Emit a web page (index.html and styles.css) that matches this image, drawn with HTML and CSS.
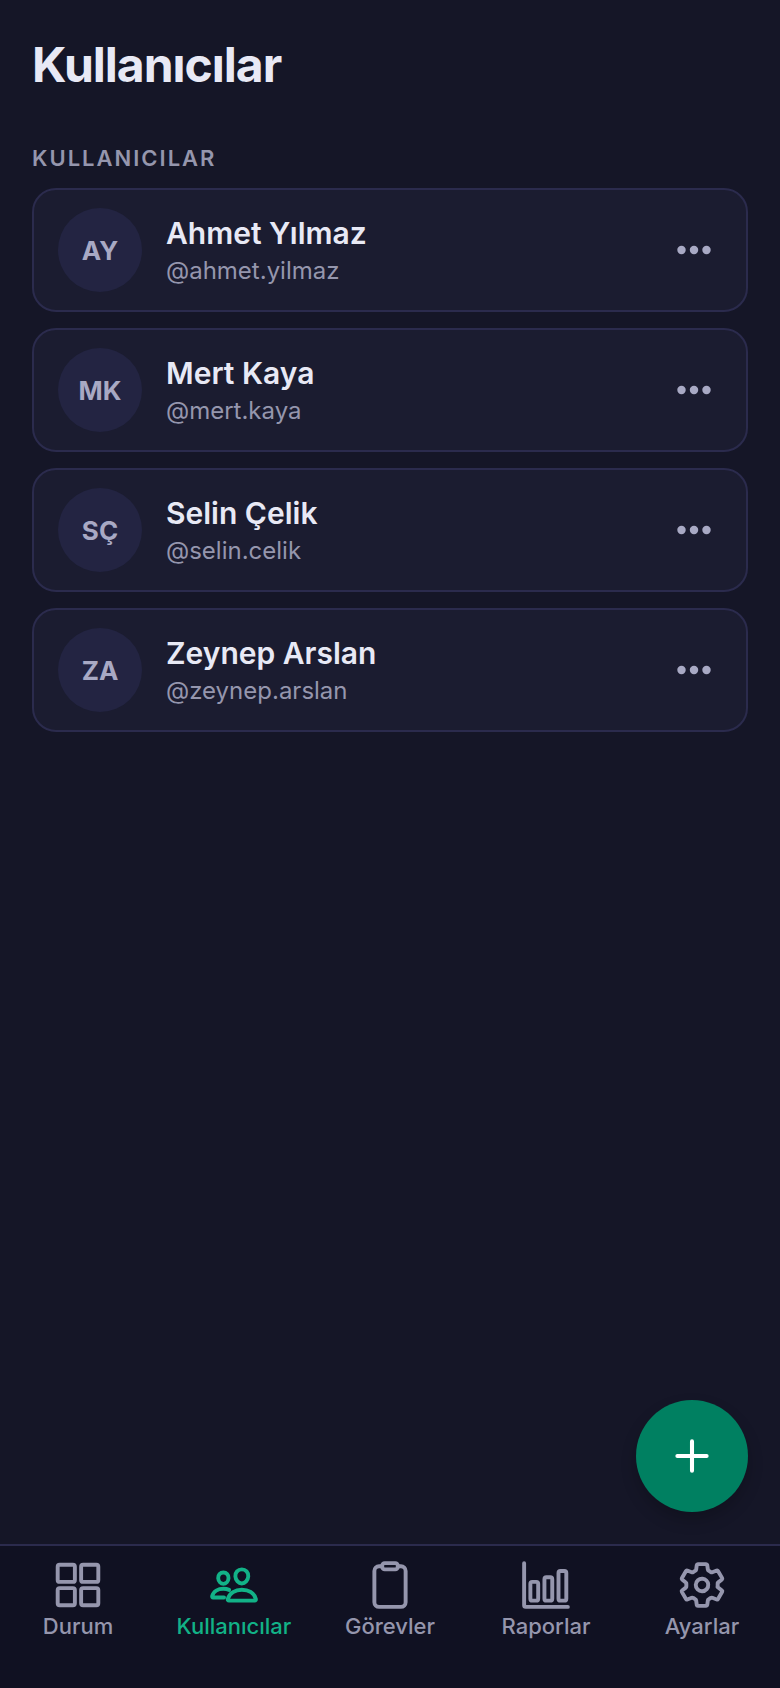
FILE: index.html
```html
<!DOCTYPE html>
<html lang="tr">
<head>
    <meta charset="UTF-8">
    <meta name="viewport" content="width=device-width, initial-scale=1.0">
    <title>Kullanıcılar</title>
    <link rel="stylesheet" href="styles.css">
</head>
<body>
    <main class="content">
        <h1>Kullanıcılar</h1>

        <!-- User list -->
        <h2>KULLANICILAR</h2>
        <ul class="user-list">
            <li class="user-card">
                <div class="avatar">AY</div>
                <div class="user-info">
                    <p class="name">Ahmet Yılmaz</p>
                    <p class="handle">@ahmet.yilmaz</p>
                </div>
                <button class="more" aria-label="Ahmet Yılmaz seçenekleri">
                    <svg viewBox="0 0 512 512"><circle cx="96" cy="256" r="54"/><circle cx="256" cy="256" r="54"/><circle cx="416" cy="256" r="54"/></svg>
                </button>
            </li>
            <li class="user-card">
                <div class="avatar">MK</div>
                <div class="user-info">
                    <p class="name">Mert Kaya</p>
                    <p class="handle">@mert.kaya</p>
                </div>
                <button class="more" aria-label="Mert Kaya seçenekleri">
                    <svg viewBox="0 0 512 512"><circle cx="96" cy="256" r="54"/><circle cx="256" cy="256" r="54"/><circle cx="416" cy="256" r="54"/></svg>
                </button>
            </li>
            <li class="user-card">
                <div class="avatar">SÇ</div>
                <div class="user-info">
                    <p class="name">Selin Çelik</p>
                    <p class="handle">@selin.celik</p>
                </div>
                <button class="more" aria-label="Selin Çelik seçenekleri">
                    <svg viewBox="0 0 512 512"><circle cx="96" cy="256" r="54"/><circle cx="256" cy="256" r="54"/><circle cx="416" cy="256" r="54"/></svg>
                </button>
            </li>
            <li class="user-card">
                <div class="avatar">ZA</div>
                <div class="user-info">
                    <p class="name">Zeynep Arslan</p>
                    <p class="handle">@zeynep.arslan</p>
                </div>
                <button class="more" aria-label="Zeynep Arslan seçenekleri">
                    <svg viewBox="0 0 512 512"><circle cx="96" cy="256" r="54"/><circle cx="256" cy="256" r="54"/><circle cx="416" cy="256" r="54"/></svg>
                </button>
            </li>
        </ul>
    </main>

    <button class="fab" aria-label="Kullanıcı ekle">
        <svg class="icon" viewBox="0 0 512 512"><path d="M256 112v288M400 256H112"/></svg>
    </button>

    <!-- Bottom tabs -->
    <nav class="tab-bar">
        <a href="#durum" class="tab">
            <svg class="icon" viewBox="0 0 512 512">
                <rect x="48" y="48" width="176" height="176" rx="20"/>
                <rect x="288" y="48" width="176" height="176" rx="20"/>
                <rect x="48" y="288" width="176" height="176" rx="20"/>
                <rect x="288" y="288" width="176" height="176" rx="20"/>
            </svg>
            <span>Durum</span>
        </a>
        <a href="#kullanicilar" class="tab active">
            <svg class="icon" viewBox="0 0 512 512">
                <path d="M402 168c-2.93 40.67-33.1 72-66 72s-63.12-31.32-66-72c-3-42.31 26.37-72 66-72s69 30.46 66 72z"/>
                <path d="M336 304c-65.17 0-127.84 32.37-143.54 95.41-2.08 8.34 3.15 16.59 11.72 16.59h263.65c8.57 0 13.77-8.25 11.72-16.59C463.85 335.36 401.18 304 336 304z"/>
                <path d="M200 185.94c-2.34 32.48-26.72 58.06-53 58.06s-50.7-25.57-53-58.06C91.61 152.15 115.34 128 147 128s55.39 24.77 53 57.94z"/>
                <path d="M206 306c-18.05-8.27-37.93-11.45-59-11.45-52 0-102.1 25.85-114.65 76.2-1.65 6.66 2.53 13.25 9.37 13.25H154"/>
            </svg>
            <span>Kullanıcılar</span>
        </a>
        <a href="#gorevler" class="tab">
            <svg class="icon" viewBox="0 0 512 512">
                <path d="M336 64h32a48 48 0 0 1 48 48v320a48 48 0 0 1-48 48H144a48 48 0 0 1-48-48V112a48 48 0 0 1 48-48h32"/>
                <rect x="176" y="32" width="160" height="64" rx="26"/>
            </svg>
            <span>Görevler</span>
        </a>
        <a href="#raporlar" class="tab">
            <svg class="icon" viewBox="0 0 512 512">
                <path d="M32 32v432a16 16 0 0 0 16 16h432"/>
                <rect x="96" y="224" width="80" height="192" rx="20"/>
                <rect x="240" y="176" width="80" height="240" rx="20"/>
                <rect x="384" y="112" width="80" height="304" rx="20"/>
            </svg>
            <span>Raporlar</span>
        </a>
        <a href="#ayarlar" class="tab">
            <svg class="icon" viewBox="0 0 512 512">
                <path d="M262.29 192.31a64 64 0 1 0 57.4 57.4 64.13 64.13 0 0 0-57.4-57.4zM416.39 256a154.34 154.34 0 0 1-1.53 20.79l45.21 35.46a10.81 10.81 0 0 1 2.45 13.75l-42.77 74a10.81 10.81 0 0 1-13.14 4.59l-44.9-18.08a16.11 16.11 0 0 0-15.17 1.75A164.48 164.48 0 0 1 325 400.8a15.94 15.94 0 0 0-8.82 12.14l-6.73 47.89a11.08 11.08 0 0 1-10.68 9.17h-85.54a11.11 11.11 0 0 1-10.69-8.87l-6.72-47.82a16.07 16.07 0 0 0-9-12.22 155.3 155.3 0 0 1-21.46-12.57 16 16 0 0 0-15.11-1.71l-44.89 18.07a10.81 10.81 0 0 1-13.14-4.58l-42.77-74a10.8 10.8 0 0 1 2.45-13.75l38.21-30a16.05 16.05 0 0 0 6-14.08c-.36-4.17-.58-8.33-.58-12.5s.21-8.27.58-12.35a16 16 0 0 0-6.07-13.94l-38.19-30A10.81 10.81 0 0 1 49.48 186l42.77-74a10.81 10.81 0 0 1 13.14-4.59l44.9 18.08a16.11 16.11 0 0 0 15.17-1.75A164.48 164.48 0 0 1 187 111.2a15.94 15.94 0 0 0 8.82-12.14l6.73-47.89A11.08 11.08 0 0 1 213.23 42h85.54a11.11 11.11 0 0 1 10.69 8.87l6.72 47.82a16.07 16.07 0 0 0 9 12.22 155.3 155.3 0 0 1 21.46 12.57 16 16 0 0 0 15.11 1.71l44.89-18.07a10.81 10.81 0 0 1 13.14 4.58l42.77 74a10.8 10.8 0 0 1-2.45 13.75l-38.21 30a16.05 16.05 0 0 0-6.05 14.08c.33 4.14.55 8.3.55 12.47z"/>
            </svg>
            <span>Ayarlar</span>
        </a>
    </nav>
</body>
</html>
```

FILE: styles.css
```css
* {
    margin: 0;
    padding: 0;
    box-sizing: border-box;
}
body {
    display: flex;
    flex-direction: column;
    min-height: 100vh;
    font-family: Inter, "Liberation Sans", sans-serif;
    background-color: #151627;
    color: #e8e9f5;
}
button {
    border: none;
    background: none;
    cursor: pointer;
}
.content {
    flex: 1;
    padding: 36px 32px;
}
h1 {
    font-size: 48px;
    line-height: 58px;
    font-weight: 700;
    letter-spacing: -1px;
    margin-bottom: 50px;
}
h2 {
    font-size: 22px;
    line-height: 28px;
    font-weight: 600;
    letter-spacing: 2px;
    color: #9596ad;
    margin-bottom: 16px;
}

/* User cards */
.user-list {
    display: flex;
    flex-direction: column;
    gap: 16px;
    list-style: none;
}
.user-card {
    display: flex;
    align-items: center;
    gap: 24px;
    padding: 18px 24px;
    background: #1b1c30;
    border: 2px solid #2b2b4d;
    border-radius: 24px;
}
.avatar {
    display: flex;
    align-items: center;
    justify-content: center;
    width: 84px;
    height: 84px;
    border-radius: 50%;
    background: #232442;
    color: #a8a9c4;
    font-size: 26px;
    font-weight: 700;
}
.user-info {
    flex: 1;
}
.name {
    font-size: 30px;
    line-height: 38px;
    font-weight: 600;
    margin-bottom: 4px;
}
.handle {
    font-size: 24px;
    line-height: 30px;
    color: #9596ad;
}
.more {
    display: flex;
    align-items: center;
    justify-content: center;
    width: 56px;
    height: 56px;
}
.more svg {
    width: 40px;
    height: 40px;
    fill: #a8a9c4;
}

/* Icons */
.icon {
    width: 50px;
    height: 50px;
    fill: none;
    stroke: currentColor;
    stroke-width: 40;
    stroke-linecap: round;
    stroke-linejoin: round;
}

/* Add button */
.fab {
    position: fixed;
    right: 32px;
    bottom: 176px;
    display: flex;
    align-items: center;
    justify-content: center;
    width: 112px;
    height: 112px;
    border-radius: 50%;
    background: #008061;
    color: #ffffff;
    box-shadow: 0 8px 16px rgba(0, 0, 0, 0.2);
}
.fab .icon {
    width: 52px;
    height: 52px;
}

/* Tab bar */
.tab-bar {
    position: sticky;
    bottom: 0;
    display: flex;
    height: 144px;
    padding-top: 14px;
    background: #101122;
    border-top: 2px solid #2b2b4d;
}
.tab {
    flex: 1;
    display: flex;
    flex-direction: column;
    align-items: center;
    color: #9596ad;
    font-size: 22px;
    line-height: 32px;
    font-weight: 500;
    text-decoration: none;
}
.tab.active {
    color: #12b287;
}
```
